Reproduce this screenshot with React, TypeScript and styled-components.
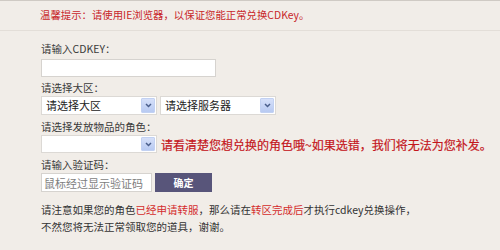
import React from "react"
import styled, { createGlobalStyle } from "styled-components"

const GlobalStyle = createGlobalStyle`
  html, body {
    margin: 0;
    padding: 0;
    background: #f1ede8;
  }
  body {
    font-family: "Noto Sans CJK SC", "Noto Sans", sans-serif;
    color: #333;
  }
`

const Page = styled.div`
  width: 500px;
  height: 250px;
  overflow: hidden;
  background: #f1ede8;
`

const Notice = styled.div`
  height: 29px;
  border-top: 1px solid #cfcac4;
  border-bottom: 1px solid #e3ded8;
  padding-left: 40px;
  font-size: 10.4px;
  line-height: 27px;
  color: #c8262a;
`

const Form = styled.form`
  display: flex;
  flex-direction: column;
  padding: 10px 0 0 41px;
`

const Field = styled.div<{ $space?: number }>`
  display: flex;
  flex-direction: column;
  margin-bottom: ${(p) => p.$space ?? 3}px;
`

const Label = styled.label`
  font-size: 10.5px;
  line-height: 16px;
  color: #3a3a3a;
`

const Row = styled.div<{ $gap?: number; $top?: number }>`
  display: flex;
  align-items: center;
  gap: ${(p) => p.$gap ?? 3}px;
  margin-top: ${(p) => p.$top ?? 0}px;
`

const TextInput = styled.input<{ $w: number; $h: number }>`
  box-sizing: border-box;
  width: ${(p) => p.$w}px;
  height: ${(p) => p.$h}px;
  margin: 0;
  padding: 0 2px;
  border: 1px solid #d6d3cf;
  background: #fff;
  font-family: inherit;
  font-size: 11px;
  color: #333;
  outline: none;

  &::placeholder {
    color: #7d7d7d;
  }
`

const SelectWrap = styled.div<{ $h: number }>`
  position: relative;
  box-sizing: border-box;
  width: 116px;
  height: ${(p) => p.$h}px;
  border: 1px solid #dcd9d5;
  background: #fff;
  overflow: hidden;
`

const NativeSelect = styled.select<{ $h: number }>`
  appearance: none;
  display: block;
  box-sizing: border-box;
  width: 100%;
  height: ${(p) => p.$h - 2}px;
  margin: 0;
  padding: 0 16px 0 4px;
  border: 0;
  background: transparent;
  font-family: inherit;
  font-size: 11px;
  line-height: ${(p) => p.$h - 2}px;
  color: #222;
  outline: none;
`

const ArrowBox = styled.span`
  position: absolute;
  top: 1px;
  right: 1px;
  bottom: 1px;
  width: 14px;
  display: flex;
  align-items: center;
  justify-content: center;
  background: linear-gradient(#d6e0f9, #b8caf2);
  border: 1px solid #c2d1f2;
  border-radius: 1px;
  box-sizing: border-box;
  pointer-events: none;
`

const Hint = styled.span`
  font-size: 12px;
  color: #c4161c;
  -webkit-text-stroke: 0.2px #c4161c;
`

const Button = styled.button`
  width: 57px;
  height: 19px;
  margin: 0;
  padding: 0;
  border: 0;
  background: #58557a;
  color: #fff;
  font-family: inherit;
  font-size: 10px;
  font-weight: bold;
`

const Note = styled.p`
  margin: 9px 0 0;
  font-size: 10.5px;
  line-height: 17px;
  color: #333;
`

const Red = styled.span`
  color: #d42c2c;
`

const Arrow = () => (
  <svg width="7" height="5" viewBox="0 0 7 5">
    <path d="M1 1 L3.5 3.5 L6 1" fill="none" stroke="#4b5f8c" strokeWidth="1.5" />
  </svg>
)

const Select: React.FC<{ h: number; text: string }> = ({ h, text }) => (
  <SelectWrap $h={h}>
    <NativeSelect $h={h} defaultValue="">
      <option value="">{text}</option>
    </NativeSelect>
    <ArrowBox>
      <Arrow />
    </ArrowBox>
  </SelectWrap>
)

export default function App() {
  return (
    <Page>
      <GlobalStyle />
      <Notice>温馨提示：请使用IE浏览器，以保证您能正常兑换CDKey。</Notice>
      <Form>
        <Field>
          <Label>请输入CDKEY：</Label>
          <Row $top={2}>
            <TextInput $w={175} $h={18} />
          </Row>
        </Field>
        <Field $space={4}>
          <Label>请选择大区：</Label>
          <Row>
            <Select h={19} text="请选择大区" />
            <Select h={19} text="请选择服务器" />
          </Row>
        </Field>
        <Field $space={4}>
          <Label>请选择发放物品的角色：</Label>
          <Row $gap={4}>
            <Select h={18} text="" />
            <Hint>请看清楚您想兑换的角色哦~如果选错，我们将无法为您补发。</Hint>
          </Row>
        </Field>
        <Field $space={0}>
          <Label>请输入验证码：</Label>
          <Row>
            <TextInput $w={111} $h={19} placeholder="鼠标经过显示验证码" />
            <Button type="button">确定</Button>
          </Row>
        </Field>
        <Note>
          请注意如果您的角色<Red>已经申请转服</Red>，那么请在<Red>转区完成后</Red>才执行cdkey兑换操作，
          <br />
          不然您将无法正常领取您的道具，谢谢。
        </Note>
      </Form>
    </Page>
  )
}
